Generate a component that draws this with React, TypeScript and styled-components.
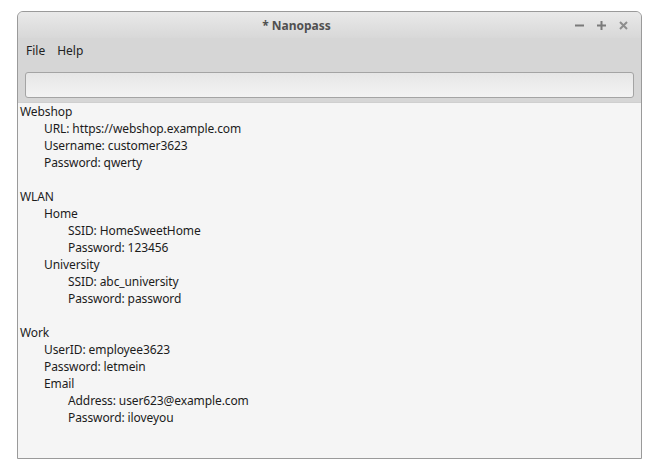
import React from "react";
import { styled, createGlobalStyle } from "styled-components";

const GlobalStyle = createGlobalStyle`
  html, body {
    margin: 0;
    padding: 0;
    background: #ffffff;
  }
  body {
    font-family: "Noto Sans", "Open Sans", sans-serif;
  }
`;

const Desktop = styled.div`
  padding: 11px 0 0 17px;
`;

const Window = styled.div`
  display: flex;
  flex-direction: column;
  width: 625px;
  height: 448px;
  box-sizing: border-box;
  border: 1px solid #9a9a9a;
  border-radius: 6px 6px 0 0;
  background: #d6d6d6;
  overflow: hidden;
`;

const TitleBar = styled.div`
  display: flex;
  align-items: center;
  height: 26px;
  background: linear-gradient(#e9e9e9, #d8d8d8);
`;

const Title = styled.div`
  flex: 1;
  text-align: center;
  font-size: 12px;
  font-weight: bold;
  color: #505050;
`;

const Controls = styled.div`
  display: flex;
  align-items: center;
  gap: 13px;
  padding-right: 13px;
`;

const ControlButton = styled.svg`
  display: block;
  width: 9px;
  height: 9px;
`;

const MenuBar = styled.div`
  display: flex;
  gap: 12px;
  height: 24px;
  align-items: center;
  padding-left: 8px;
  padding-bottom: 2px;
  font-size: 12px;
  color: #222222;
`;

const MenuItem = styled.span``;

const SearchRow = styled.div`
  padding: 8px 7px 4px 7px;
`;

const SearchField = styled.input`
  display: block;
  width: 100%;
  height: 26px;
  box-sizing: border-box;
  border: 1px solid #a4a4a4;
  border-radius: 3px;
  background: linear-gradient(#e6e6e6, #f3f3f3);
  outline: none;
`;

const Content = styled.div`
  flex: 1;
  background: #f5f5f5;
  padding: 0 2px;
  border-top: 1px solid #cfcfcf;
  font-size: 12px;
  line-height: 17px;
  letter-spacing: -0.1px;
  color: #1c1c1c;
`;

const Line = styled.div<{ $level: number }>`
  padding-left: ${({ $level }) => $level * 24}px;
  height: 17px;
  white-space: pre;
`;

const lines: [number, string][] = [
  [0, "Webshop"],
  [1, "URL: https://webshop.example.com"],
  [1, "Username: customer3623"],
  [1, "Password: qwerty"],
  [0, ""],
  [0, "WLAN"],
  [1, "Home"],
  [2, "SSID: HomeSweetHome"],
  [2, "Password: 123456"],
  [1, "University"],
  [2, "SSID: abc_university"],
  [2, "Password: password"],
  [0, ""],
  [0, "Work"],
  [1, "UserID: employee3623"],
  [1, "Password: letmein"],
  [1, "Email"],
  [2, "Address: user623@example.com"],
  [2, "Password: iloveyou"],
];

const App = () => {
  return (
    <Desktop>
      <GlobalStyle />
      <Window>
        <TitleBar>
          <Title>* Nanopass</Title>
          <Controls>
            <ControlButton viewBox="0 0 9 9">
              <rect x="0" y="3.5" width="9" height="2" fill="#7a7a7a" />
            </ControlButton>
            <ControlButton viewBox="0 0 9 9">
              <rect x="0" y="3.5" width="9" height="2" fill="#7a7a7a" />
              <rect x="3.5" y="0" width="2" height="9" fill="#7a7a7a" />
            </ControlButton>
            <ControlButton viewBox="0 0 9 9">
              <path d="M1 1 L8 8 M8 1 L1 8" stroke="#8e8e8e" strokeWidth="2" />
            </ControlButton>
          </Controls>
        </TitleBar>
        <MenuBar>
          <MenuItem>File</MenuItem>
          <MenuItem>Help</MenuItem>
        </MenuBar>
        <SearchRow>
          <SearchField type="text" />
        </SearchRow>
        <Content>
          {lines.map(([level, text], i) => (
            <Line key={i} $level={level}>
              {text}
            </Line>
          ))}
        </Content>
      </Window>
    </Desktop>
  );
};

export default App;
